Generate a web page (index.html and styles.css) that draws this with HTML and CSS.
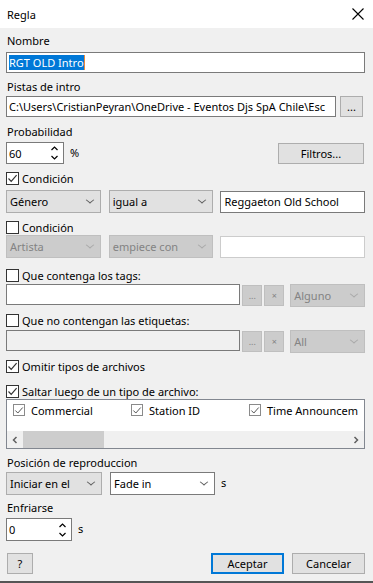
FILE: index.html
```html
<!DOCTYPE html>
<html lang="es">
<head>
    <meta charset="UTF-8">
    <title>Regla</title>
    <link rel="stylesheet" href="styles.css">
</head>
<body>
    <div class="dialog">
        <div class="titlebar">
            <span class="title">Regla</span>
            <svg class="close" width="12" height="12" viewBox="0 0 12 12">
                <path d="M0.5 0.5 L11.5 11.5 M11.5 0.5 L0.5 11.5" stroke="#000" stroke-width="1.1" fill="none"/>
            </svg>
        </div>

        <div class="content">
            <div class="label">Nombre</div>
            <div class="textbox name-box"><span class="sel">RGT OLD Intro</span><span class="caret"></span></div>

            <div class="label mt6">Pistas de intro</div>
            <div class="row mt1">
                <div class="textbox path-box">C:\Users\CristianPeyran\OneDrive - Eventos Djs SpA Chile\Esc</div>
                <button class="btn dots-btn">...</button>
            </div>

            <div class="label mt7">Probabilidad</div>
            <div class="row mt2">
                <div class="spin prob">
                    <span>60</span>
                    <svg class="spin-arrows" width="7" height="14" viewBox="0 0 7 14">
                        <path d="M0.5 4 L3.5 1 L6.5 4 M0.5 10 L3.5 13 L6.5 10" stroke="#000" stroke-width="1.2" fill="none"/>
                    </svg>
                </div>
                <span class="unit">%</span>
                <button class="btn filtros">Filtros...</button>
            </div>

            <label class="check mt6">
                <span class="box"><svg width="11" height="11" viewBox="0 0 11 11"><path d="M1.5 5.5 L4.2 8.3 L9.6 2.2" stroke="#333" stroke-width="1.2" fill="none"/></svg></span>
                Condición
            </label>
            <div class="row mt4">
                <div class="combo w-field">Género<i class="chev"></i></div>
                <div class="combo w-op">igual a<i class="chev"></i></div>
                <div class="textbox value-box">Reggaeton Old School</div>
            </div>

            <label class="check mt6">
                <span class="box"></span>
                Condición
            </label>
            <div class="row">
                <div class="combo disabled w-field">Artista<i class="chev"></i></div>
                <div class="combo disabled w-op">empiece con<i class="chev"></i></div>
                <div class="textbox value-box off"></div>
            </div>

            <label class="check mt9">
                <span class="box"></span>
                Que contenga los tags:
            </label>
            <div class="row tag-row mt1">
                <div class="textbox tags-box"></div>
                <button class="btn small" disabled>...</button>
                <button class="btn small" disabled>×</button>
                <div class="combo disabled w-any">Alguno<i class="chev"></i></div>
            </div>

            <label class="check mt5">
                <span class="box"></span>
                Que no contengan las etiquetas:
            </label>
            <div class="row tag-row mt2">
                <div class="textbox tags-box grey"></div>
                <button class="btn small" disabled>...</button>
                <button class="btn small" disabled>×</button>
                <div class="combo disabled w-any">All<i class="chev"></i></div>
            </div>

            <label class="check mt5">
                <span class="box"><svg width="11" height="11" viewBox="0 0 11 11"><path d="M1.5 5.5 L4.2 8.3 L9.6 2.2" stroke="#333" stroke-width="1.2" fill="none"/></svg></span>
                Omitir tipos de archivos
            </label>

            <label class="check mt9">
                <span class="box"><svg width="11" height="11" viewBox="0 0 11 11"><path d="M1.5 5.5 L4.2 8.3 L9.6 2.2" stroke="#333" stroke-width="1.2" fill="none"/></svg></span>
                Saltar luego de un tipo de archivo:
            </label>
            <div class="listbox">
                <div class="list-items">
                    <div class="item"><span class="ibox"><svg width="11" height="11" viewBox="0 0 11 11"><path d="M1.5 5.5 L4.2 8.3 L9.6 2.2" stroke="#555" stroke-width="1.1" fill="none"/></svg></span>Commercial</div>
                    <div class="item"><span class="ibox"><svg width="11" height="11" viewBox="0 0 11 11"><path d="M1.5 5.5 L4.2 8.3 L9.6 2.2" stroke="#555" stroke-width="1.1" fill="none"/></svg></span>Station ID</div>
                    <div class="item last"><span class="ibox"><svg width="11" height="11" viewBox="0 0 11 11"><path d="M1.5 5.5 L4.2 8.3 L9.6 2.2" stroke="#555" stroke-width="1.1" fill="none"/></svg></span>Time Announcem</div>
                </div>
                <div class="hscroll">
                    <svg class="arrow" width="8" height="8" viewBox="0 0 8 8"><path d="M5.5 1 L2.5 4 L5.5 7" stroke="#606060" stroke-width="1.5" fill="none"/></svg>
                    <div class="track"><div class="thumb"></div></div>
                    <svg class="arrow" width="8" height="8" viewBox="0 0 8 8"><path d="M2.5 1 L5.5 4 L2.5 7" stroke="#606060" stroke-width="1.5" fill="none"/></svg>
                </div>
            </div>

            <div class="label mt6">Posición de reproduccion</div>
            <div class="row mt1">
                <div class="combo w-start">Iniciar en el<i class="chev"></i></div>
                <div class="combo editable w-op">Fade in<i class="chev"></i></div>
                <span class="unit">s</span>
            </div>

            <div class="label mt5">Enfriarse</div>
            <div class="row mt2">
                <div class="spin cool">
                    <span>0</span>
                    <svg class="spin-arrows" width="7" height="14" viewBox="0 0 7 14">
                        <path d="M0.5 4 L3.5 1 L6.5 4 M0.5 10 L3.5 13 L6.5 10" stroke="#000" stroke-width="1.2" fill="none"/>
                    </svg>
                </div>
                <span class="unit">s</span>
            </div>

            <div class="footer">
                <button class="btn help">?</button>
                <div class="actions">
                    <button class="btn default">Aceptar</button>
                    <button class="btn">Cancelar</button>
                </div>
            </div>
        </div>
        <div class="frame-bottom"></div>
    </div>
</body>
</html>
```

FILE: styles.css
```css
* {
    margin: 0;
    padding: 0;
    box-sizing: border-box;
}

body {
    font-family: 'Noto Sans', 'Liberation Sans', sans-serif;
    font-size: 11px;
    color: #000;
    background: #f0f0f0;
}

.dialog {
    width: 373px;
    height: 583px;
    background: #f0f0f0;
    display: flex;
    flex-direction: column;
}

.titlebar {
    height: 28px;
    background: #fff;
    display: flex;
    align-items: center;
    justify-content: space-between;
    padding: 0 9px 0 7px;
}

.title {
    font-size: 11px;
}

.content {
    flex: 1;
    padding: 5px 8px 0 6px;
}

.label {
    height: 16px;
    line-height: 16px;
    padding-left: 1px;
}

.mt1 { margin-top: 1px; }
.mt2 { margin-top: 2px; }
.mt4 { margin-top: 4px; }
.mt5 { margin-top: 5px; }
.mt6 { margin-top: 6px; }
.mt7 { margin-top: 7px; }
.mt9 { margin-top: 9px; }

.row {
    display: flex;
    align-items: center;
}

.textbox {
    height: 21px;
    background: #fff;
    border: 1px solid #7a7a7a;
    padding: 0 2px;
    line-height: 19px;
    white-space: nowrap;
    overflow: hidden;
    margin-top: 3px;
}

.row .textbox {
    margin-top: 0;
}

.name-box {
    width: 359px;
    display: flex;
    align-items: center;
}

.sel {
    background: #0078d7;
    color: #fff;
    line-height: 15px;
}

.caret {
    width: 1px;
    height: 15px;
    background: #e8893c;
}

.path-box {
    width: 330px;
    flex-shrink: 0;
}

.btn {
    font-family: inherit;
    font-size: 11px;
    color: #000;
    background: #e1e1e1;
    border: 1px solid #adadad;
    height: 21px;
    line-height: 19px;
}

.btn:disabled {
    background: #cccccc;
    border-color: #bfbfbf;
    color: #838383;
}

.dots-btn {
    width: 23px;
    margin-left: 4px;
    line-height: 17px;
}

.spin {
    height: 22px;
    background: #fff;
    border: 1px solid #7a7a7a;
    display: flex;
    align-items: center;
    justify-content: space-between;
    padding: 0 5px 0 2px;
}

.spin.prob {
    width: 58px;
}

.spin.cool {
    width: 66px;
    height: 23px;
}

.unit {
    margin-left: 6px;
    margin-top: -2px;
}

.filtros {
    width: 86px;
    margin-left: auto;
    margin-right: 1px;
}

.check {
    display: flex;
    align-items: center;
    height: 16px;
    gap: 3px;
}

.box {
    width: 13px;
    height: 13px;
    border: 1px solid #333;
    background: #fff;
    display: flex;
    align-items: center;
    justify-content: center;
}

.combo {
    position: relative;
    height: 23px;
    line-height: 21px;
    background: #e1e1e1;
    border: 1px solid #adadad;
    padding-left: 3px;
    white-space: nowrap;
}

.combo.disabled {
    background: #cccccc;
    border-color: #bfbfbf;
    color: #838383;
}

.combo.editable {
    background: #fff;
    border-color: #7a7a7a;
}

.chev {
    position: absolute;
    right: 7px;
    top: 6px;
    width: 6px;
    height: 6px;
    border-right: 1px solid #606060;
    border-bottom: 1px solid #606060;
    transform: scaleY(0.8) rotate(45deg);
}

.combo.disabled .chev {
    border-color: #a9a9a9;
}

.w-field {
    width: 95px;
}

.w-op {
    width: 105px;
    margin-left: 8px;
}

.w-start {
    width: 96px;
}

.value-box {
    width: 145px;
    height: 22px;
    margin-left: 7px;
    padding-left: 3px;
}

.value-box.off {
    border-color: #cccccc;
}

.tag-row {
    align-items: flex-start;
}

.tags-box {
    width: 235px;
    height: 21px;
}

.tags-box.grey {
    background: #f0f0f0;
}

.small {
    width: 20px;
    height: 21px;
    margin-left: 2px;
    margin-top: 1px;
    font-size: 9px;
}

.w-any {
    width: 75px;
    margin-left: 6px;
}

.listbox {
    width: 359px;
    height: 50px;
    background: #fff;
    border: 1px solid #828790;
    display: flex;
    flex-direction: column;
    overflow: hidden;
}

.list-items {
    height: 31px;
    display: flex;
    padding: 3px 0 0 6px;
    white-space: nowrap;
}

.item {
    display: flex;
    align-items: center;
    gap: 6px;
    width: 118px;
    flex-shrink: 0;
    height: 14px;
}

.item.last {
    width: auto;
}

.ibox {
    width: 12px;
    height: 12px;
    border: 1px solid #8a8a8a;
    display: flex;
    align-items: center;
    justify-content: center;
}

.hscroll {
    height: 17px;
    display: flex;
    align-items: center;
    background: #f0f0f0;
}

.arrow {
    margin: 0 4px;
    flex-shrink: 0;
}

.track {
    flex: 1;
    height: 17px;
}

.thumb {
    width: 81px;
    height: 17px;
    background: #cdcdcd;
}

.footer {
    margin-top: 12px;
    display: flex;
    justify-content: space-between;
    padding-left: 1px;
}

.help {
    width: 26px;
}

.actions {
    display: flex;
    gap: 8px;
}

.actions .btn {
    width: 73px;
}

.btn.default {
    border: 2px solid #0078d7;
    line-height: 17px;
}

.frame-bottom {
    height: 2px;
    background: #555;
}
```
